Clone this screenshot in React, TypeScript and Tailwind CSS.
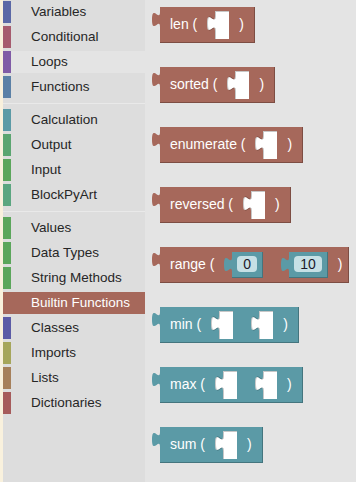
import type { ReactNode } from 'react';

type Cat = { label: string; bar: string; hover?: boolean; selected?: boolean } | 'sep';

const categories: Cat[] = [
  { label: 'Variables', bar: 'bg-[#5b68a6]' },
  { label: 'Conditional', bar: 'bg-[#a65b6e]' },
  { label: 'Loops', bar: 'bg-[#805ba6]', hover: true },
  { label: 'Functions', bar: 'bg-[#5b80a6]' },
  'sep',
  { label: 'Calculation', bar: 'bg-[#5b9aa6]' },
  { label: 'Output', bar: 'bg-[#5ba570]' },
  { label: 'Input', bar: 'bg-[#5ba65b]' },
  { label: 'BlockPyArt', bar: 'bg-[#5ba680]' },
  'sep',
  { label: 'Values', bar: 'bg-[#5ba65b]' },
  { label: 'Data Types', bar: 'bg-[#5ba65b]' },
  { label: 'String Methods', bar: 'bg-[#5ba65b]' },
  { label: 'Builtin Functions', bar: 'bg-[#a6685b]', selected: true },
  { label: 'Classes', bar: 'bg-[#5b5ba6]' },
  { label: 'Imports', bar: 'bg-[#a6a65b]' },
  { label: 'Lists', bar: 'bg-[#a6805b]' },
  { label: 'Dictionaries', bar: 'bg-[#a65b5b]' },
];

const TAB = 'M8 0 C8 10 0 -8 0 7.5 S8 5 8 15 Z';

function Tab({ fill, className = '' }: { fill: string; className?: string }) {
  return (
    <svg width="8" height="15" viewBox="0 0 8 15" className={`shrink-0 overflow-visible ${className}`}>
      <path d={TAB} fill={fill} />
    </svg>
  );
}

// empty value input: white hole with the puzzle notch on its left
function Slot({ className = '' }: { className?: string }) {
  return (
    <svg width="22" height="28" viewBox="0 0 22 28" className={`shrink-0 overflow-visible ${className}`}>
      <path d="M22 0 H8 V5 C8 15 0 -3 0 12.5 S8 10 8 20 V28 H22 Z" fill="#ffffff" />
      <path d="M22 0.5 H8.5 V5 C8.5 15 0.5 -3 0.5 12.5 S8.5 10 8.5 20 V28" fill="none" stroke="rgba(0,0,0,0.22)" />
    </svg>
  );
}

function Value({ n, className = '' }: { n: string; className?: string }) {
  return (
    <div className={`flex h-[26px] shrink-0 ${className}`}>
      <Tab fill="#5b9aa6" className="mt-[5px]" />
      <div className="flex h-[26px] items-center border-r border-b border-[#44757e] bg-[#5b9aa6] px-[5px]">
        <span className="flex h-[16px] items-center rounded-[4px] bg-[#c6e0e5] px-[6px] text-[14px] leading-none text-[#1a1a2a]">
          {n}
        </span>
      </div>
    </div>
  );
}

function Block({ teal, children, pr = 'pr-[10px]' }: { teal?: boolean; children: ReactNode; pr?: string }) {
  return (
    <div className="flex h-[36px]">
      <Tab fill={teal ? '#5b9aa6' : '#a6685b'} className="mt-[5px]" />
      <div
        className={`flex h-[36px] items-center gap-[10px] border-r border-b pl-[10px] ${pr} text-[14px] text-white ${
          teal ? 'border-[#44757e] bg-[#5b9aa6]' : 'border-[#7d4d43] bg-[#a6685b]'
        }`}
      >
        {children}
      </div>
    </div>
  );
}

export default function App() {
  return (
    <div className="flex h-[482px] w-[356px] overflow-hidden font-['Liberation_Sans',Arial,sans-serif]">
      <div className="w-[3px] shrink-0 bg-[#f9f1dd]" />
      <nav className="w-[142px] shrink-0 bg-[#dddddd] pt-[1px]">
        {categories.map((c, i) =>
          c === 'sep' ? (
            <div key={i} className="h-[8px] pt-[2px]">
              <div className="h-px bg-[#e9e9e9]" />
            </div>
          ) : (
            <div
              key={c.label}
              className={`mb-[3px] flex h-[22px] items-center text-[13.5px] ${
                c.selected ? 'bg-[#a6685b] text-white' : c.hover ? 'bg-[#e4e4e4] text-[#262626]' : 'text-[#262626]'
              }`}
            >
              <div className={`h-full w-[8px] ${c.bar}`} />
              <span className="pl-[20px]">{c.label}</span>
            </div>
          ),
        )}
      </nav>
      <main className="flex flex-1 flex-col items-start gap-[24px] bg-[#e4e4e4] pt-[7px] pl-[7px]">
        <Block>
          <span>len (</span>
          <Slot />
          <span>)</span>
        </Block>
        <Block>
          <span>sorted (</span>
          <Slot />
          <span>)</span>
        </Block>
        <Block>
          <span>enumerate (</span>
          <Slot />
          <span>)</span>
        </Block>
        <Block>
          <span>reversed (</span>
          <Slot />
          <span>)</span>
        </Block>
        <Block pr="pr-[6px]">
          <span>range (</span>
          <Value n="0" />
          <Value n="10" className="ml-[8px]" />
          <span>)</span>
        </Block>
        <Block teal>
          <span>min (</span>
          <Slot />
          <Slot className="ml-[8px]" />
          <span>)</span>
        </Block>
        <Block teal>
          <span>max (</span>
          <Slot />
          <Slot className="ml-[8px]" />
          <span>)</span>
        </Block>
        <Block teal>
          <span>sum (</span>
          <Slot />
          <span>)</span>
        </Block>
      </main>
    </div>
  );
}
